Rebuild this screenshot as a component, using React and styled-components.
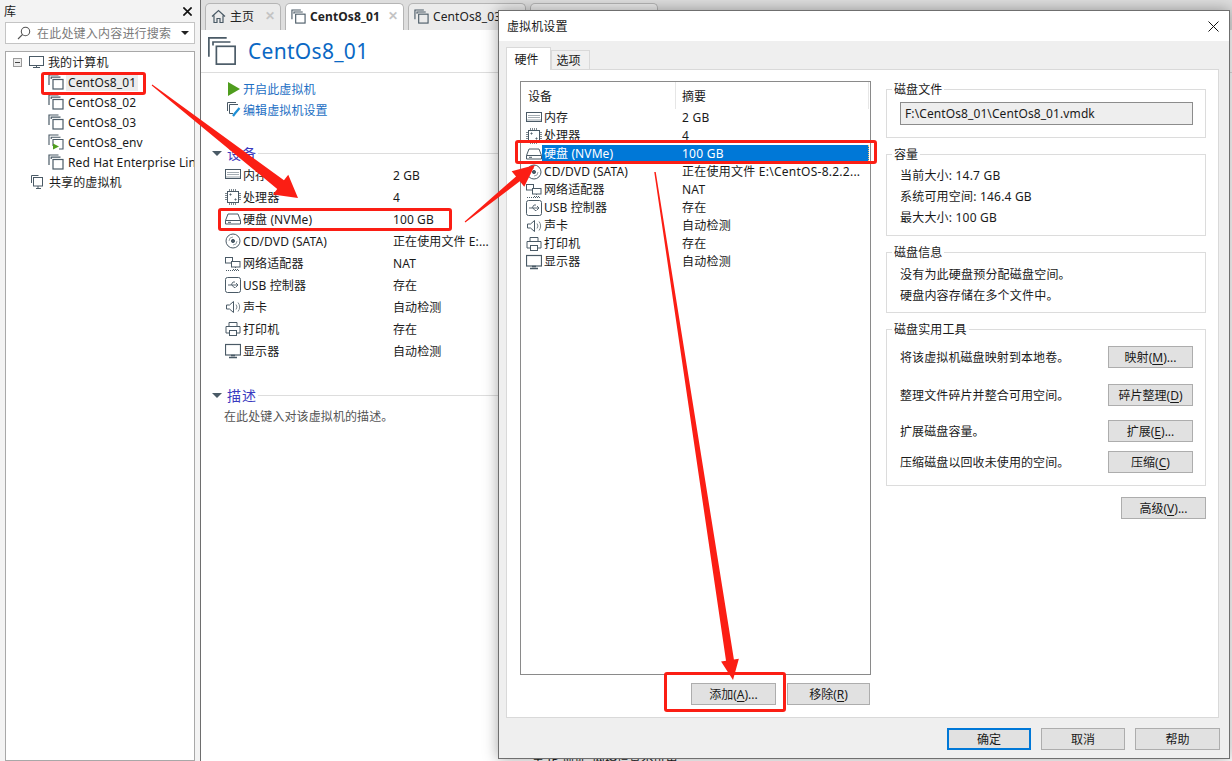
import React from 'react';
import styled, { createGlobalStyle } from 'styled-components';

const GlobalStyle = createGlobalStyle`
    html, body {
        margin: 0;
        padding: 0;
        background: #ffffff;
    }

    * {
        box-sizing: border-box;
    }

    svg {
        flex-shrink: 0;
    }
`;

const FONT = `"Noto Sans", "Noto Sans CJK SC", sans-serif`;

const devices = [
    { icon: 'memory', name: '内存', value: '2 GB' },
    { icon: 'cpu', name: '处理器', value: '4' },
    { icon: 'disk', name: '硬盘 (NVMe)', value: '100 GB' },
    { icon: 'cd', name: 'CD/DVD (SATA)', value: '正在使用文件 E:...', dialogValue: '正在使用文件 E:\\CentOS-8.2.2...' },
    { icon: 'network', name: '网络适配器', value: 'NAT' },
    { icon: 'usb', name: 'USB 控制器', value: '存在' },
    { icon: 'sound', name: '声卡', value: '自动检测' },
    { icon: 'printer', name: '打印机', value: '存在' },
    { icon: 'display', name: '显示器', value: '自动检测' },
];

const tools = [
    { text: '将该虚拟机磁盘映射到本地卷。', label: '映射', key: 'M', dots: true, height: 38 },
    { text: '整理文件碎片并整合可用空间。', label: '碎片整理', key: 'D', height: 36 },
    { text: '扩展磁盘容量。', label: '扩展', key: 'E', dots: true, height: 31 },
    { text: '压缩磁盘以回收未使用的空间。', label: '压缩', key: 'C', height: 22 },
];

const Screen = styled.div`
    position: relative;
    display: flex;
    width: 1232px;
    height: 761px;
    overflow: hidden;
    font-family: ${FONT};
    font-size: 12px;
    letter-spacing: 0.1px;
    color: #1a1a1a;
    background: #f0f0f0;
`;

const Library = styled.aside`
    display: flex;
    flex-direction: column;
    width: 201px;
    padding: 0 5px 0 5px;
    background: #f3f3f3;
    border-right: 1px solid #6e6e6e;
    flex-shrink: 0;
`;

const LibraryHead = styled.div`
    display: flex;
    align-items: center;
    justify-content: space-between;
    height: 22px;
    font-size: 12px;
    margin-left: -1px;
    padding-right: 3px;
`;

const SearchBox = styled.div`
    display: flex;
    align-items: center;
    height: 22px;
    padding: 0 5px 0 11px;
    gap: 6px;
    background: #ffffff;
    border: 1px solid #c4c4c4;
    color: #7a7a7a;
`;

const SearchText = styled.span`
    flex: 1;
    letter-spacing: 0.2px;
    white-space: nowrap;
`;

const Caret = styled.span`
    width: 0;
    height: 0;
    border-left: 4px solid transparent;
    border-right: 4px solid transparent;
    border-top: 4px solid ${(p) => p.$color || '#222'};
    flex-shrink: 0;
`;

const SectionCaret = styled(Caret)`
    border-left-width: 5px;
    border-right-width: 5px;
    border-top-width: 5px;
`;

const Tree = styled.div`
    flex: 1;
    margin-top: 7px;
    padding: 0 0 0 7px;
    background: #ffffff;
    border: 1px solid #a8a8a8;
    overflow: hidden;
`;

const TreeRow = styled.div`
    display: flex;
    align-items: center;
    height: 20px;
    gap: 2px;
    padding-left: ${(p) => p.$indent}px;
    white-space: nowrap;
`;

const Expander = styled.span`
    display: inline-flex;
    align-items: center;
    justify-content: center;
    width: 9px;
    height: 9px;
    margin-right: 5px;
    border: 1px solid #9a9a9a;
    background: #eeeeee;

    &::before {
        content: '';
        width: 5px;
        height: 1px;
        background: #444;
    }
`;

const TreeLabel = styled.span`
    padding: 0 2px;
    letter-spacing: 0.1px;
    background: ${(p) => (p.$selected ? '#ececec' : 'transparent')};
`;

const Main = styled.main`
    display: flex;
    flex-direction: column;
    flex: 1;
    min-width: 0;
    background: #ffffff;
`;

const TabStrip = styled.div`
    display: flex;
    align-items: flex-end;
    height: 30px;
    padding-left: 4px;
    gap: 4px;
    background: #dedede;
`;

const Tab = styled.div`
    display: flex;
    align-items: center;
    width: ${(p) => p.$width}px;
    height: 27px;
    padding: 0 5px 2px 5px;
    gap: 4px;
    border: 1px solid #b5b5b5;
    border-bottom: none;
    border-radius: 5px 5px 0 0;
    background: ${(p) => (p.$active ? '#ffffff' : '#ebebeb')};
    font-weight: ${(p) => (p.$active ? 700 : 400)};
    color: #222;
    flex-shrink: 0;
`;

const TabTitle = styled.span`
    flex: 1;
    white-space: nowrap;
    overflow: hidden;
`;

const TabClose = styled.span`
    color: #c4c4c4;
    font-size: 12px;
    font-weight: 700;
    font-family: "Liberation Sans", sans-serif;
`;

const VmHead = styled.div`
    display: flex;
    align-items: center;
    height: 43px;
    padding: 0 0 0 6px;
    gap: 11px;
    border-bottom: 1px solid #dddddd;
`;

const VmTitle = styled.div`
    font-size: 21px;
    line-height: 28px;
    letter-spacing: 0.3px;
    color: #0a68c4;
`;

const Actions = styled.div`
    display: flex;
    flex-direction: column;
    padding: 5px 0 0 26px;
`;

const ActionRow = styled.div`
    display: flex;
    align-items: center;
    height: 21px;
    gap: 2px;
    color: #1d6fc4;
`;

const Section = styled.section`
    padding: ${(p) => p.$top}px 6px 0 11px;
`;

const SectionHead = styled.div`
    display: flex;
    align-items: center;
    height: 22px;
    gap: 5px;
    font-size: 14px;
    letter-spacing: 1px;
    color: #3a3ac0;
`;

const SectionLine = styled.span`
    flex: 1;
    height: 1px;
    margin-left: -4px;
    background: #dddddd;
`;

const DeviceRows = styled.div`
    display: flex;
    flex-direction: column;
    padding-left: 13px;
`;

const DeviceRow = styled.div`
    display: grid;
    grid-template-columns: 16px 148px 1fr;
    align-items: center;
    height: 22px;
    column-gap: 2px;
    white-space: nowrap;
`;

const Note = styled.div`
    padding: 1px 0 0 12px;
    color: #555;
`;

const BehindDialog = styled.div`
    margin-top: auto;
    height: 8px;
    padding-left: 331px;
    line-height: 14px;
    white-space: nowrap;
`;

const Dialog = styled.div`
    position: absolute;
    left: 498px;
    top: 10px;
    width: 732px;
    height: 749px;
    display: flex;
    flex-direction: column;
    background: #efefef;
    border: 1px solid #6f6f6f;
    box-shadow: 0 0 14px rgba(0, 0, 0, 0.35);
`;

const DialogTitle = styled.div`
    display: flex;
    align-items: center;
    justify-content: space-between;
    height: 30px;
    padding: 0 10px 0 8px;
    background: #ffffff;
    flex-shrink: 0;
`;

const DialogTabs = styled.div`
    display: flex;
    align-items: flex-end;
    height: 28px;
    padding-left: 7px;
    flex-shrink: 0;
`;

const DialogTab = styled.div`
    display: flex;
    align-items: center;
    justify-content: center;
    width: ${(p) => p.$width}px;
    height: ${(p) => (p.$active ? 23 : 20)}px;
    padding-right: 4px;
    margin-bottom: -1px;
    border: 1px solid #d9d9d9;
    border-bottom: ${(p) => (p.$active ? 'none' : '1px solid #d9d9d9')};
    background: ${(p) => (p.$active ? '#ffffff' : '#f0f0f0')};
    position: relative;
    z-index: ${(p) => (p.$active ? 1 : 0)};
`;

const Panel = styled.div`
    display: grid;
    grid-template-columns: 351px 320px;
    column-gap: 15px;
    height: 649px;
    margin: 0 10px 0 7px;
    padding: 11px 0 0 13px;
    background: #ffffff;
    border: 1px solid #d9d9d9;
    flex-shrink: 0;
`;

const ListColumn = styled.div`
    display: flex;
    flex-direction: column;
    width: 351px;
`;

const DeviceList = styled.div`
    height: 594px;
    padding: 0 1px;
    border: 1px solid #8a8a8a;
`;

const ListHead = styled.div`
    display: grid;
    grid-template-columns: 154px 1fr;
    height: 27px;
    align-items: center;
`;

const ListHeadCell = styled.div`
    height: 100%;
    display: flex;
    align-items: center;
    padding-left: 6px;
    border-right: 1px solid #e6e6e6;
`;

const ListRow = styled.div`
    display: grid;
    grid-template-columns: 18px 132px 1fr;
    align-items: center;
    height: 18px;
    padding-left: 4px;
    white-space: nowrap;
`;

const ListName = styled.span`
    margin-left: -2px;
    padding-left: 2px;
    line-height: 18px;
    color: ${(p) => (p.$selected ? '#ffffff' : 'inherit')};
    background: ${(p) => (p.$selected ? '#0078d7' : 'transparent')};
`;

const ListValue = styled.span`
    padding-left: 6px;
    line-height: 18px;
    letter-spacing: 0.25px;
    color: ${(p) => (p.$selected ? '#ffffff' : 'inherit')};
    background: ${(p) => (p.$selected ? '#0078d7' : 'transparent')};
    border-right: ${(p) => (p.$selected ? '1px dotted #f5c26b' : 'none')};
`;

const ListButtons = styled.div`
    display: flex;
    justify-content: flex-end;
    gap: 11px;
    margin-top: 8px;
    padding-right: 1px;
`;

const Button = styled.button`
    display: inline-flex;
    align-items: center;
    justify-content: center;
    width: ${(p) => p.$width || 85}px;
    height: 22px;
    padding: 0;
    font-family: ${FONT};
    font-size: 12px;
    color: #1a1a1a;
    background: #e1e1e1;
    border: ${(p) => (p.$primary ? '2px solid #0078d7' : '1px solid #adadad')};
    flex-shrink: 0;
`;

const RightColumn = styled.div`
    display: flex;
    flex-direction: column;
    gap: 7px;
    margin-top: -1px;
`;

const Group = styled.fieldset`
    margin: 0;
    height: ${(p) => p.$height}px;
    padding: ${(p) => p.$pad || '3px'} 13px 0 13px;
    border: 1px solid #dcdcdc;
    min-width: 0;
`;

const GroupTitle = styled.legend`
    padding: 2px 2px 0 2px;
    margin-left: -8px;
    line-height: 16px;
`;

const PathField = styled.div`
    display: flex;
    align-items: center;
    height: 23px;
    width: 293px;
    padding-left: 4px;
    background: #eeeeee;
    border: 1px solid #8c8c8c;
`;

const InfoLine = styled.div`
    height: 21px;
    line-height: 21px;
    letter-spacing: 0.2px;
    white-space: nowrap;
`;

const ToolRow = styled.div`
    display: flex;
    align-items: flex-start;
    justify-content: space-between;
    height: ${(p) => p.$height}px;
    line-height: 24px;
`;

const ToolRows = styled.div`
    display: flex;
    flex-direction: column;
    align-items: stretch;
    width: 293px;
`;

const AdvancedRow = styled.div`
    display: flex;
    justify-content: flex-end;
    margin-top: 4px;
`;

const DialogFoot = styled.div`
    display: flex;
    justify-content: flex-end;
    gap: 10px;
    padding: 10px 9px 0 0;
`;

const Underline = styled.span`
    text-decoration: underline;
    text-underline-offset: 2px;
`;

const Markup = styled.div`
    position: absolute;
    inset: 0;
    pointer-events: none;
`;

const RedBox = styled.div`
    position: absolute;
    left: ${(p) => p.$x}px;
    top: ${(p) => p.$y}px;
    width: ${(p) => p.$w}px;
    height: ${(p) => p.$h}px;
    border: 3px solid #fb1e14;
    border-radius: 3px;
`;

const ArrowSvg = styled.svg`
    position: absolute;
    inset: 0;
    width: 1232px;
    height: 761px;
`;

// screenshot-style annotation arrow: thin tail, fat head
const Arrow = ({ x1, y1, x2, y2, tail = 1, neck = 8, head = 24, len = 36 }) => {
    const d = Math.hypot(x2 - x1, y2 - y1);
    const ux = (x2 - x1) / d;
    const uy = (y2 - y1) / d;
    const nx = -uy;
    const ny = ux;
    const bx = x2 - ux * len;
    const by = y2 - uy * len;
    const pts = [
        [x1 + (nx * tail) / 2, y1 + (ny * tail) / 2],
        [bx + (nx * neck) / 2, by + (ny * neck) / 2],
        [bx + (nx * head) / 2, by + (ny * head) / 2],
        [x2, y2],
        [bx - (nx * head) / 2, by - (ny * head) / 2],
        [bx - (nx * neck) / 2, by - (ny * neck) / 2],
        [x1 - (nx * tail) / 2, y1 - (ny * tail) / 2],
    ];
    return <polygon points={pts.map((p) => p.join(',')).join(' ')} fill="#fb1e14" />;
};

const VmIcon = ({ size = 16, color = '#4a5a66', width = 1.2 }) => (
    <svg width={size} height={size} viewBox="0 0 16 16" fill="none" stroke={color} strokeWidth={width}>
        <path d="M10.5 1H1V11" />
        <path d="M12.5 3.2H3.2V5" />
        <rect x="5" y="5.5" width="10" height="9.5" />
    </svg>
);

const DeviceIcon = ({ type }) => {
    const common = { width: 16, height: 16, viewBox: '0 0 16 16', fill: 'none', stroke: '#4a5a66', strokeWidth: 1 };
    switch (type) {
        case 'memory':
            return (
                <svg {...common}>
                    <rect x="0.5" y="2.5" width="15" height="9" />
                    <path d="M2.5 5.5h11M2.5 7.5h11" strokeDasharray="1 1" />
                    <path d="M1 10h14" stroke="#9aa4ab" />
                </svg>
            );
        case 'cpu':
            return (
                <svg {...common}>
                    <rect x="2.5" y="2.5" width="11" height="11" />
                    <path d="M0 4.5h2M0 6.5h2M0 8.5h2M0 10.5h2M14 4.5h2M14 6.5h2M14 8.5h2M14 10.5h2M4.5 0v2M6.5 0v2M8.5 0v2M10.5 0v2M4.5 14v2M6.5 14v2M8.5 14v2M10.5 14v2" stroke="#7d878e" />
                    <path d="M5 5h1v1H5zM10 10h1v1h-1z" />
                </svg>
            );
        case 'disk':
            return (
                <svg {...common}>
                    <path d="M0.5 9.5L3 3h10l2.5 6.5v3.5H0.5z" />
                    <path d="M0.5 9.5h15M3 11.3h3" />
                </svg>
            );
        case 'cd':
            return (
                <svg {...common}>
                    <circle cx="8" cy="8" r="7" />
                    <circle cx="8" cy="8" r="1.6" fill="#4a5a66" />
                    <path d="M4 8a4 4 0 0 1 4-4M12 8a4 4 0 0 1-4 4" stroke="#9aa4ab" />
                </svg>
            );
        case 'network':
            return (
                <svg {...common}>
                    <rect x="0.5" y="2.5" width="7" height="5.5" />
                    <rect x="6.5" y="6.5" width="8.5" height="5.5" fill="#fff" />
                    <path d="M10.5 12v2M8 14.5h5M1 15.5h14" strokeDasharray="1 1" />
                </svg>
            );
        case 'usb':
            return (
                <svg {...common}>
                    <rect x="0.5" y="0.5" width="15" height="15" rx="2" />
                    <path d="M3 8h10M11 6l2 2-2 2M6 8l2-3h2M7 8l2 2.5h1.5" strokeWidth="0.9" />
                </svg>
            );
        case 'sound':
            return (
                <svg {...common}>
                    <path d="M1.5 6v4h3l4 3.5v-11L4.5 6z" />
                    <path d="M11 5.5a4 4 0 0 1 0 5M13 3.5a7 7 0 0 1 0 9" stroke="#7d878e" />
                </svg>
            );
        case 'printer':
            return (
                <svg {...common}>
                    <path d="M4 5V1.5h8V5M4 12H1V5.5h14V12h-3" />
                    <rect x="4.5" y="9.5" width="7" height="5" />
                </svg>
            );
        default:
            return (
                <svg {...common}>
                    <rect x="0.5" y="1.5" width="15" height="10.5" strokeWidth="1.2" />
                    <path d="M4 14.5h8M6 12.5h4" strokeWidth="1.4" />
                </svg>
            );
    }
};

const MonitorIcon = () => (
    <svg width="15" height="14" viewBox="0 0 15 14" fill="none" stroke="#4a5a66">
        <rect x="0.5" y="1.5" width="14" height="9" />
        <path d="M4 12.5h7M7.5 10.5v2" />
    </svg>
);

const SharedIcon = () => (
    <svg width="15" height="15" viewBox="0 0 15 15" fill="none" stroke="#4a5a66">
        <path d="M8.5 0.5H1.5V8" />
        <rect x="3.5" y="2.5" width="9" height="8.5" />
        <path d="M6 13.5h5M8 11v2" />
    </svg>
);

const RunningVmIcon = () => (
    <svg width="16" height="16" viewBox="0 0 16 16" fill="none" stroke="#4a5a66" strokeWidth="1.1">
        <path d="M10.5 1H1V11" />
        <path d="M12.5 3.2H3.2V5" />
        <path d="M5 12V5.5h10V15H11" />
        <path d="M5 9.5l6 3-6 3z" fill="#4f9d1e" stroke="none" />
    </svg>
);

const PlayIcon = () => (
    <svg width="14" height="14" viewBox="0 0 14 14">
        <path d="M1 0l12 7-12 7z" fill="#4f9d1e" />
    </svg>
);

const EditVmIcon = () => (
    <svg width="14" height="15" viewBox="0 0 14 15" fill="none" stroke="#4a5a66">
        <path d="M9 0.5H0.5V9" />
        <path d="M11 2.5H2.5V11.5H6" />
        <path d="M12.5 6l-5 6-1.5 2" stroke="#1d8fd6" strokeWidth="2.2" />
    </svg>
);

const HomeIcon = () => (
    <svg width="15" height="15" viewBox="0 0 15 15" fill="none" stroke="#4a5a66" strokeWidth="1.2">
        <path d="M1 7.5L7.5 1.5 14 7.5M3 6.5V13.5H6V9.5H9V13.5H12V6.5" />
    </svg>
);

const SearchIcon = () => (
    <svg width="14" height="14" viewBox="0 0 14 14" fill="none" stroke="#555" strokeWidth="1.1">
        <circle cx="8.5" cy="5.5" r="4.2" />
        <path d="M5.5 8.5L1 13" />
    </svg>
);

const CloseIcon = ({ size = 11, width = 1 }) => (
    <svg width={size} height={size} viewBox="0 0 11 11" stroke="#111" strokeWidth={width}>
        <path d="M0.5 0.5l10 10M10.5 0.5l-10 10" />
    </svg>
);

const App = () => {
    return (
        <Screen>
            <GlobalStyle />
            <Library>
                <LibraryHead>
                    <span>库</span>
                    <CloseIcon size={9} width={2} />
                </LibraryHead>
                <SearchBox>
                    <SearchIcon />
                    <SearchText>在此处键入内容进行搜索</SearchText>
                    <Caret />
                </SearchBox>
                <Tree>
                    <TreeRow $indent={0}>
                        <Expander />
                        <MonitorIcon />
                        <TreeLabel>我的计算机</TreeLabel>
                    </TreeRow>
                    <TreeRow $indent={35}>
                        <VmIcon />
                        <TreeLabel $selected>CentOs8_01</TreeLabel>
                    </TreeRow>
                    <TreeRow $indent={35}>
                        <VmIcon />
                        <TreeLabel>CentOs8_02</TreeLabel>
                    </TreeRow>
                    <TreeRow $indent={35}>
                        <VmIcon />
                        <TreeLabel>CentOs8_03</TreeLabel>
                    </TreeRow>
                    <TreeRow $indent={35}>
                        <RunningVmIcon />
                        <TreeLabel>CentOs8_env</TreeLabel>
                    </TreeRow>
                    <TreeRow $indent={35}>
                        <VmIcon />
                        <TreeLabel>Red Hat Enterprise Linux 8</TreeLabel>
                    </TreeRow>
                    <TreeRow $indent={17}>
                        <SharedIcon />
                        <TreeLabel>共享的虚拟机</TreeLabel>
                    </TreeRow>
                </Tree>
            </Library>

            <Main>
                <TabStrip>
                    <Tab $width={76}>
                        <HomeIcon />
                        <TabTitle>主页</TabTitle>
                        <TabClose>✕</TabClose>
                    </Tab>
                    <Tab $width={119} $active>
                        <VmIcon size={15} />
                        <TabTitle>CentOs8_01</TabTitle>
                        <TabClose>✕</TabClose>
                    </Tab>
                    <Tab $width={118}>
                        <VmIcon size={15} />
                        <TabTitle>CentOs8_03</TabTitle>
                    </Tab>
                    <Tab $width={128} />
                </TabStrip>
                <VmHead>
                    <VmIcon size={30} width={0.9} />
                    <VmTitle>CentOs8_01</VmTitle>
                </VmHead>
                <Actions>
                    <ActionRow>
                        <PlayIcon />
                        <span>开启此虚拟机</span>
                    </ActionRow>
                    <ActionRow>
                        <EditVmIcon />
                        <span>编辑虚拟机设置</span>
                    </ActionRow>
                </Actions>
                <Section $top={22}>
                    <SectionHead>
                        <SectionCaret $color="#4a5a66" />
                        <span>设备</span>
                        <SectionLine />
                    </SectionHead>
                    <DeviceRows>
                        {devices.map((device) => (
                            <DeviceRow key={device.name}>
                                <DeviceIcon type={device.icon} />
                                <span>{device.name}</span>
                                <span>{device.value}</span>
                            </DeviceRow>
                        ))}
                    </DeviceRows>
                </Section>
                <Section $top={22}>
                    <SectionHead>
                        <SectionCaret $color="#4a5a66" />
                        <span>描述</span>
                        <SectionLine />
                    </SectionHead>
                    <Note>在此处键入对该虚拟机的描述。</Note>
                </Section>
                <BehindDialog>主 IP 地址: 网络信息不可用</BehindDialog>
            </Main>

            <Dialog>
                <DialogTitle>
                    <span>虚拟机设置</span>
                    <CloseIcon />
                </DialogTitle>
                <DialogTabs>
                    <DialogTab $width={45} $active>硬件</DialogTab>
                    <DialogTab $width={39}>选项</DialogTab>
                </DialogTabs>
                <Panel>
                    <ListColumn>
                        <DeviceList>
                            <ListHead>
                                <ListHeadCell>设备</ListHeadCell>
                                <ListHeadCell>摘要</ListHeadCell>
                            </ListHead>
                            {devices.map((device) => {
                                const selected = device.icon === 'disk';
                                return (
                                    <ListRow key={device.name}>
                                        <DeviceIcon type={device.icon} />
                                        <ListName $selected={selected}>{device.name}</ListName>
                                        <ListValue $selected={selected}>{device.dialogValue || device.value}</ListValue>
                                    </ListRow>
                                );
                            })}
                        </DeviceList>
                        <ListButtons>
                            <Button>添加(<Underline>A</Underline>)...</Button>
                            <Button $width={83}>移除(<Underline>R</Underline>)</Button>
                        </ListButtons>
                    </ListColumn>
                    <RightColumn>
                        <Group $height={58} $pad="4px">
                            <GroupTitle>磁盘文件</GroupTitle>
                            <PathField>F:\CentOs8_01\CentOs8_01.vmdk</PathField>
                        </Group>
                        <Group $height={91} $pad="2px">
                            <GroupTitle>容量</GroupTitle>
                            <InfoLine>当前大小: 14.7 GB</InfoLine>
                            <InfoLine>系统可用空间: 146.4 GB</InfoLine>
                            <InfoLine>最大大小: 100 GB</InfoLine>
                        </Group>
                        <Group $height={70} $pad="3px">
                            <GroupTitle>磁盘信息</GroupTitle>
                            <InfoLine>没有为此硬盘预分配磁盘空间。</InfoLine>
                            <InfoLine>硬盘内容存储在多个文件中。</InfoLine>
                        </Group>
                        <Group $height={166} $pad="8px">
                            <GroupTitle>磁盘实用工具</GroupTitle>
                            <ToolRows>
                                {tools.map((tool) => (
                                    <ToolRow key={tool.key} $height={tool.height}>
                                        <span>{tool.text}</span>
                                        <Button>
                                            {tool.label}(<Underline>{tool.key}</Underline>){tool.dots ? '...' : ''}
                                        </Button>
                                    </ToolRow>
                                ))}
                            </ToolRows>
                        </Group>
                        <AdvancedRow>
                            <Button>高级(<Underline>V</Underline>)...</Button>
                        </AdvancedRow>
                    </RightColumn>
                </Panel>
                <DialogFoot>
                    <Button $primary $width={84}>确定</Button>
                    <Button $width={84}>取消</Button>
                    <Button>帮助</Button>
                </DialogFoot>
            </Dialog>

            <Markup>
                <RedBox $x={41} $y={72} $w={105} $h={23} />
                <RedBox $x={218} $y={208} $w={234} $h={23} />
                <RedBox $x={515} $y={140} $w={362} $h={24} />
                <RedBox $x={664} $y={672} $w={122} $h={40} />
                <ArrowSvg viewBox="0 0 1232 761">
                    <Arrow x1={152} y1={85} x2={298} y2={198} neck={11} head={25} len={22} />
                    <Arrow x1={465} y1={222} x2={535} y2={165} neck={6} head={20} len={22} />
                    <Arrow x1={655} y1={172} x2={733} y2={680} tail={1.5} neck={8} head={18} len={20} />
                </ArrowSvg>
            </Markup>
        </Screen>
    );
};

export default App;
